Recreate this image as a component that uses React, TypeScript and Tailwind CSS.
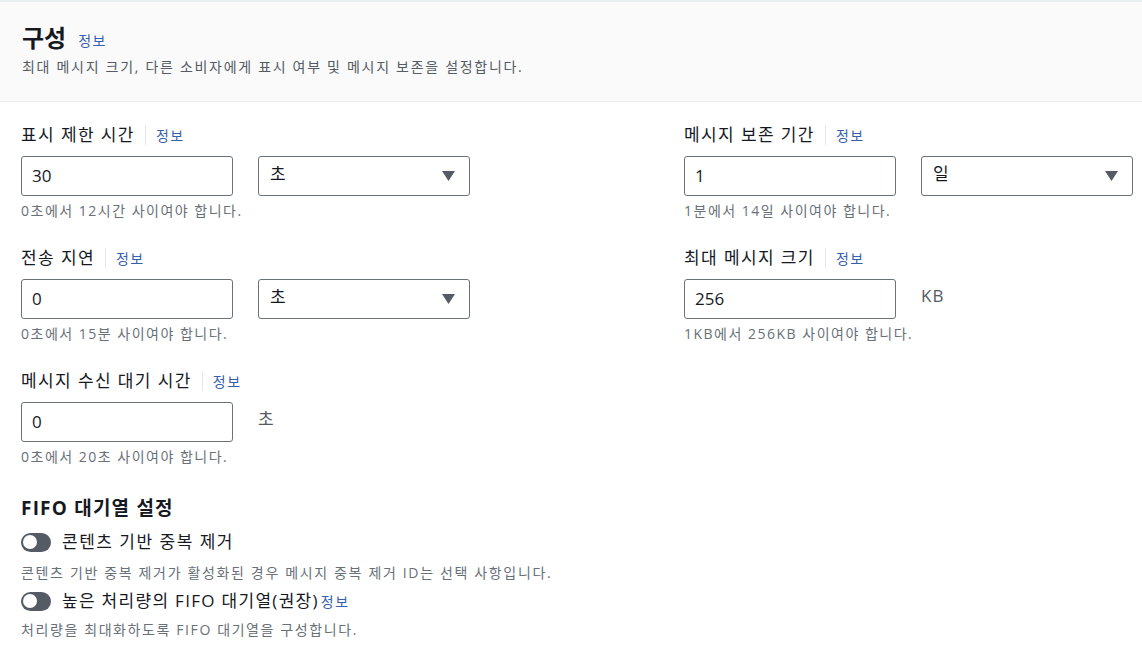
import React from "react";

const font = { fontFamily: '"Open Sans", "Noto Sans CJK KR", sans-serif' };

const Info = () => <span className="text-[14px] tracking-[1.5px] text-[#3560ae]">정보</span>;

const Label = ({ text }: { text: string }) => (
  <div className="flex items-center h-[22px] text-[17px] tracking-[1.4px] text-[#16191f]">
    <span>{text}</span>
    <span className="ml-[10px] mr-[10px] h-[20px] w-px bg-[#e4e7ea]" />
    <Info />
  </div>
);

const Input = ({ value }: { value: string }) => (
  <div className="flex items-center w-[212px] h-[40px] border border-[#6b7178] rounded-[3px] pl-[10px] text-[17px] text-[#16191f] bg-white">
    {value}
  </div>
);

const Select = ({ value }: { value: string }) => (
  <div className="flex items-center justify-between w-[212px] h-[40px] border border-[#6b7178] rounded-[3px] pl-[11px] pr-[14px] text-[17px] text-[#16191f] bg-white">
    <span className="-mt-[4px]">{value}</span>
    <svg width="13" height="10" viewBox="0 0 13 10">
      <polygon points="0,0 13,0 6.5,10" fill="#545b64" />
    </svg>
  </div>
);

const Unit = ({ text }: { text: string }) => (
  <div className="ml-[25px] h-[40px] flex items-center -mt-[3px] text-[17px] tracking-[1px] text-[#545b64]">
    {text}
  </div>
);

const Field = ({
  label,
  value,
  select,
  unit,
  hint,
  last,
}: {
  label: string;
  value: string;
  select?: string;
  unit?: string;
  hint: string;
  last?: boolean;
}) => (
  <div className={last ? "" : "mb-[28px]"}>
    <Label text={label} />
    <div className="flex items-start mt-[10px]">
      <Input value={value} />
      {select && (
        <div className="ml-[25px]">
          <Select value={select} />
        </div>
      )}
      {unit && <Unit text={unit} />}
    </div>
    <div className="mt-[7px] h-[16px] leading-[16px] text-[14px] tracking-[1.5px] text-[#687078]">
      {hint}
    </div>
  </div>
);

const Toggle = () => (
  <div className="w-[30px] h-[19px] rounded-full bg-[#545b64] flex items-center px-[2px] shrink-0">
    <div className="w-[14px] h-[14px] rounded-full bg-white" />
  </div>
);

export default function App() {
  return (
    <div className="w-[1142px] h-[647px] bg-white overflow-hidden" style={font}>
      <div className="bg-[#fafafa] border-t-2 border-b border-[#eaeded] px-[22px] pt-[21px] pb-[24px]">
        <div className="flex items-center h-[30px]">
          <span className="text-[24px] font-bold text-[#16191f]">구성</span>
          <span className="ml-[12px] mt-[3px]">
            <Info />
          </span>
        </div>
        <div className="mt-[4px] h-[20px] leading-[20px] text-[14px] tracking-[1.7px] text-[#545b64]">
          최대 메시지 크기, 다른 소비자에게 표시 여부 및 메시지 보존을 설정합니다.
        </div>
      </div>

      <div className="pl-[21px] pt-[22px]">
        <div className="flex">
          <div className="w-[663px]">
            <Field label="표시 제한 시간" value="30" select="초" hint="0초에서 12시간 사이여야 합니다." />
            <Field label="전송 지연" value="0" select="초" hint="0초에서 15분 사이여야 합니다." />
            <Field label="메시지 수신 대기 시간" value="0" unit="초" hint="0초에서 20초 사이여야 합니다." last />
          </div>
          <div>
            <Field label="메시지 보존 기간" value="1" select="일" hint="1분에서 14일 사이여야 합니다." />
            <Field label="최대 메시지 크기" value="256" unit="KB" hint="1KB에서 256KB 사이여야 합니다." />
          </div>
        </div>

        <div className="mt-[31px] text-[19px] font-bold tracking-[1.2px] text-[#16191f] h-[24px] leading-[24px]">
          FIFO 대기열 설정
        </div>
        <div className="mt-[9px] flex items-center h-[26px]">
          <Toggle />
          <span className="ml-[11px] text-[17px] tracking-[1.5px] text-[#16191f]">콘텐츠 기반 중복 제거</span>
        </div>
        <div className="mt-[9px] h-[18px] leading-[18px] text-[14px] tracking-[1.65px] text-[#687078]">
          콘텐츠 기반 중복 제거가 활성화된 경우 메시지 중복 제거 ID는 선택 사항입니다.
        </div>
        <div className="mt-[6px] flex items-center h-[26px]">
          <Toggle />
          <span className="ml-[11px] text-[17px] tracking-[1.3px] text-[#16191f]">높은 처리량의 FIFO 대기열(권장)</span>
          <span className="ml-[2px]">
            <Info />
          </span>
        </div>
        <div className="mt-[7px] h-[18px] leading-[18px] text-[14px] tracking-[1.6px] text-[#687078]">
          처리량을 최대화하도록 FIFO 대기열을 구성합니다.
        </div>
      </div>
    </div>
  );
}
